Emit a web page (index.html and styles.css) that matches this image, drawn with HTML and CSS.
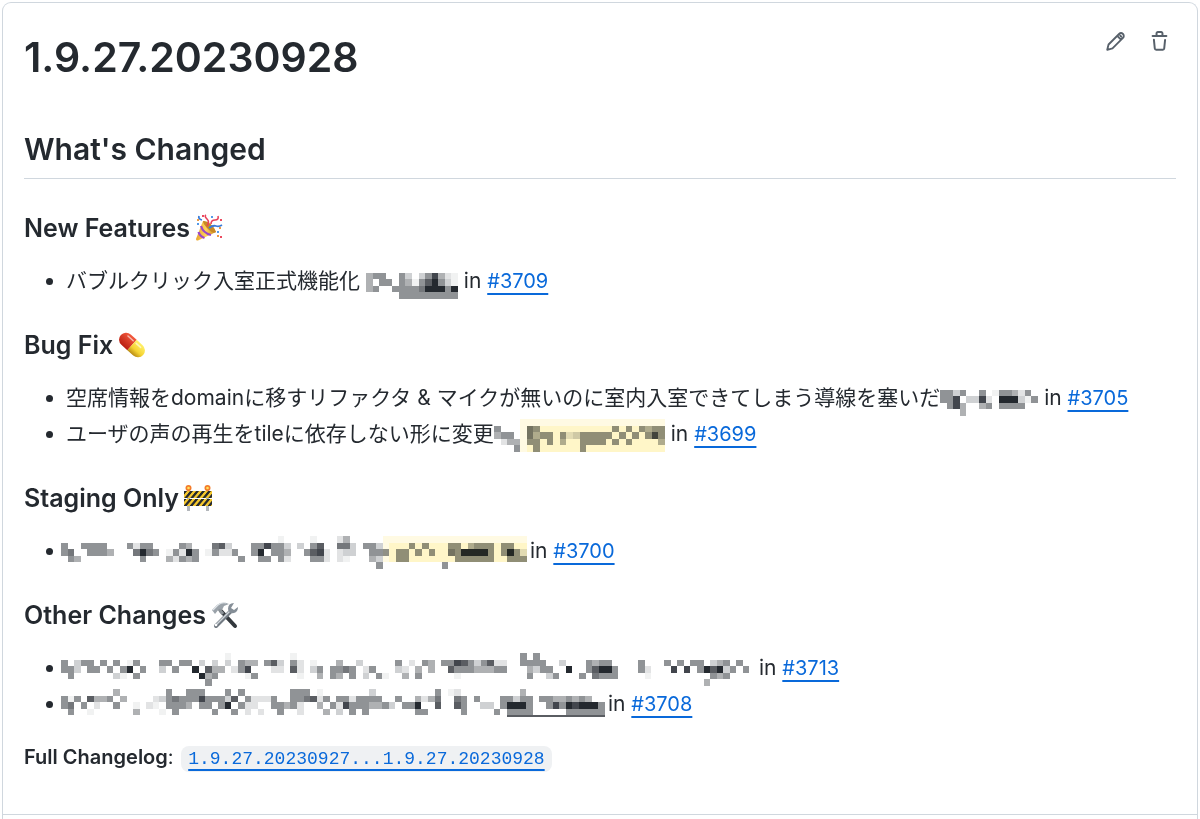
FILE: index.html
```html
<!DOCTYPE html>
<html lang="ja">
  <head>
    <meta charset="utf-8">
    <title>1.9.27.20230928</title>
    <link rel="stylesheet" href="styles.css">
  </head>
<body>

  <main class="release">
    <header class="release-header">
      <h1>1.9.27.20230928</h1>
      <div class="actions">
        <button type="button" aria-label="Edit">
          <svg viewBox="0 0 16 16"><path class="line" d="m1.700 14.300 1-4 8-8a2 2 0 0 1 3 3l-8 8ZM9.300 3.700l3 3M11.600 2.900a1.400 1.400 0 0 0 1.500 1.500"/></svg>
        </button>
        <button type="button" aria-label="Delete">
          <svg viewBox="0 0 16 16"><path d="M11 1.75V3h2.25a.75.75 0 0 1 0 1.5H2.75a.75.75 0 0 1 0-1.5H5V1.75C5 .784 5.784 0 6.75 0h2.5C10.216 0 11 .784 11 1.75ZM4.496 6.675l.66 6.6a.25.25 0 0 0 .249.225h5.19a.25.25 0 0 0 .249-.225l.66-6.6a.75.75 0 0 1 1.492.149l-.66 6.6A1.748 1.748 0 0 1 10.595 15h-5.19a1.75 1.75 0 0 1-1.741-1.575l-.66-6.6a.75.75 0 1 1 1.492-.15ZM6.5 1.75V3h3V1.75a.25.25 0 0 0-.25-.25h-2.5a.25.25 0 0 0-.25.25Z"/></svg>
        </button>
      </div>
    </header>

    <section class="notes">
      <h2>What's Changed</h2>

      <h3>New Features
        <svg class="emoji" viewBox="0 0 28 28" aria-hidden="true">
          <defs>
            <linearGradient id="cone"><stop offset="0" stop-color="#e9a52c"/><stop offset=".5" stop-color="#ffd45a"/><stop offset="1" stop-color="#c98218"/></linearGradient>
          </defs>
          <path d="M8 7 1 25q0 2 2 1.500L21 18Q19 10 8 7Z" fill="url(#cone)"/>
          <path d="M8 7q7-1 13 11-3 2-8-3T8 7Z" fill="#c98a24"/>
          <path d="M6 12q2 7 10 9M3.500 18q1 4 6 6" fill="none" stroke="#9b48c8" stroke-width="2.200"/>
          <path d="M12 12q3-4 0-7t-1-4M16 10q0-4 4-4t3-4" fill="none" stroke="#e8425a" stroke-width="1.600"/>
          <path d="M14 14q4-3 7-2t6-1M7 6Q3 5 4 2" fill="none" stroke="#397bd8" stroke-width="1.800"/>
          <path d="M7 1h2v2H7zM25 5h2v2h-2zM25 22h2v2h-2z" fill="#eb4b61"/>
          <path d="M2 9h2v2H2zM16 2h2v2h-2zM22 17h2v2h-2z" fill="#5499e8"/>
          <path d="M24 13h2v2h-2zM2 5h2v2H2zM22 21h2v2h-2z" fill="#ef9b43"/>
        </svg>
      </h3>
      <ul>
        <li>バブルクリック入室正式機能化 <svg class="mosaic" data-cols="14" data-cells="/0:455 5:53 8:358421/0:4 2:55 5:541579531/0:45 4:55556999 12:59/5:555555555"></svg> in <a href="#3709">#3709</a></li>
      </ul>

      <h3>Bug Fix
        <svg class="emoji" viewBox="0 0 28 28" aria-hidden="true">
          <defs>
            <linearGradient id="pill-red" x2="0" y2="1"><stop offset="0" stop-color="#f45a3e"/><stop offset="1" stop-color="#b91f12"/></linearGradient>
            <linearGradient id="pill-yellow" x2="0" y2="1"><stop offset="0" stop-color="#fff16a"/><stop offset=".6" stop-color="#f5d332"/><stop offset="1" stop-color="#b98c14"/></linearGradient>
          </defs>
          <g transform="rotate(42 14 14)">
            <path d="M14 7H6a7 7 0 0 0 0 14h8Z" fill="url(#pill-red)"/>
            <path d="M14 7h8a7 7 0 0 1 0 14h-8Z" fill="url(#pill-yellow)"/>
            <path d="M5 10h7M16 10h6" stroke="#fff" stroke-width="1.500" stroke-linecap="round" opacity=".6"/>
          </g>
        </svg>
      </h3>
      <ul>
        <li>空席情報をdomainに移すリファクタ &amp; マイクが無いのに室内入室できてしまう導線を塞いだ<svg class="mosaic" data-cols="15" data-cells="/0:5535 6:5 8:155425/0:558 4:3382 9:999315/1:584 6:45 9:5555/3:4"></svg> in <a href="#3705">#3705</a></li>
        <li>ユーザの声の再生をtileに依存しない形に変更<svg class="mosaic" data-cols="26" data-mark="4 0 22 5" data-cells="/0:5 5:65 18:5 20:5 22:5455/0:455 5:6455 10:5235555 17:5 19:5 21:5 23:585/1:244 5:55 8:5 10:4 13:555 16:5 18:5 20:5 25:4/3:5 6:5 13:5"></svg> in <a href="#3699">#3699</a></li>
      </ul>

      <h3>Staging Only
        <svg class="emoji" viewBox="0 0 28 28" aria-hidden="true">
          <defs>
            <pattern id="stripes" width="6" height="8" patternUnits="userSpaceOnUse" patternTransform="skewX(-40)"><path d="M0 0h6v8H0z" fill="#f5c72c"/><path d="M0 0h3v8H0z" fill="#282b2e"/></pattern>
          </defs>
          <path d="M3 5h3v22H3zM22 5h3v22h-3z" fill="#b3b7bb"/>
          <path d="M0 7h28v7H0zM0 15h28v7H0z" fill="url(#stripes)"/>
          <circle cx="4.500" cy="4" r="3" fill="#f47b2a"/><circle cx="23.500" cy="4" r="3" fill="#f47b2a"/>
          <circle cx="4.500" cy="4" r="1.300" fill="#ffe45b"/><circle cx="23.500" cy="4" r="1.300" fill="#ffe45b"/>
        </svg>
      </h3>
      <ul>
        <li><svg class="mosaic lead" data-cols="71" data-mark="49 0 22 4" data-cells="33:1 38:1 42:24/0:5 3:5555 10:5255 18:54 23:673 29:558553 36:3 38:57 42:663 46:553 53:5 55:5 59:55 62:4555 67:55/0:56 4:5554 11:6965 16:15295 22:15225 29:59 32:554 37:5782 42:233 47:555 51:55 54:5 56:5 59:6599995 67:5952/1:54 12:5 16:42545 27:5 30:55 33:52 38:552 42:21 47:43 51:55 60:555555 68:555/48:5 58:5"></svg> in <a href="#3700">#3700</a></li>
      </ul>

      <h3>Other Changes
        <svg class="emoji" viewBox="0 0 28 28" aria-hidden="true">
          <path d="m10 10 14 15" stroke="#33383d" stroke-width="4" stroke-linecap="round"/>
          <path d="m7 7 5 6" stroke="#8b9298" stroke-width="3"/>
          <path d="M1 9 6 4q5-4 12-1l-5 2-2 4-3-1-4 5Z" fill="#9aa2a9"/>
          <path d="m2 9 5-5q4-3 8-2" fill="none" stroke="#dfe4e8" stroke-width="1.200"/>
          <path d="M5 25 20 10" stroke="#737b83" stroke-width="4" stroke-linecap="round"/>
          <path d="M5 24 20 9" stroke="#d0d6db" stroke-width="1.500"/>
          <path d="M23 2q-6 0-6 6 1 5 6 4 4-1 4-6l-4 3-3-2Z" fill="#858e97"/>
          <circle cx="5" cy="24" r="1.300" fill="#fff"/>
        </svg>
      </h3>
      <ul>
        <li><svg class="mosaic lead" data-cols="106" data-cells="25:1 35:1 70:5 72:5/0:5 2:355 6:5 8:5 10:15 15:55 18:55 21:3 23:3 25:3 27:544 31:573 35:52 38:1 42:4 45:3 51:5 53:2 55:54 58:5587535722 70:5555 76:3 80:5455 88:5 92:5 94:5 96:55 99:345 103:5/0:553 4:55 7:5 9:59 12:5 15:3 17:5 20:9 22:744 26:258 32:22 35:72 38:35 41:5565 46:25 51:32 54:4 56:4 59:75554 64:4455 71:4355 77:9 80:57995 88:52 93:8 95:8 97:597935 104:5/1:5 8:31 11:5 21:945 28:15 36:1 39:4 41:54 44:5 46:3 48:51 52:4 54:5 60:1 71:5 74:35 79:5 81:6555 89:1 99:545/22:5 98:4"></svg> in <a href="#3713">#3713</a></li>
        <li><svg class="mosaic lead" data-cols="83" data-rule="68" data-cells="8:4 16:5 19:555 25:5 27:5 35:555 39:1 47:3 57:5 59:12 70:4/0:515 4:7445 9:4 14:2356555855537 28:52225 35:556725 42:5525555 51:5 54:4246 60:65 63:5 67:55355 73:554 76:45454/0:56 3:5 5:2 8:5 11:1 13:21 16:5554 21:55 24:59 27:522 32:55452 39:4 41:5285554453 52:559 57:7 60:75 64:33 67:59995 74:5859899 81:95/1:5 4:1 11:4 15:1 17:5 23:5 26:5 28:2 30:2 33:5 36:2 40:4 42:3 44:5 46:5 54:55 61:5 66:5 68:5555 77:555555"></svg> in <a href="#3708">#3708</a></li>
      </ul>

      <p class="changelog"><strong>Full Changelog</strong>: <a href="#compare"><code>1.9.27.20230927...1.9.27.20230928</code></a></p>
    </section>

    <footer class="release-footer"></footer>
  </main>

  <script src="mosaic.js"></script>
</body>
</html>
```

FILE: styles.css
```css
* { box-sizing: border-box; }

body {
  margin: 0;
  color: #24292f;
  background: #fff;
  font: 20px/32px Inter, "Noto Sans CJK JP", sans-serif;
}

.release {
  margin: 2px 2px 0;
  border: 1px solid #d0d7de;
  border-bottom: none;
  border-radius: 9px 9px 0 0;
}

.release-header {
  display: flex;
  justify-content: space-between;
  align-items: flex-start;
  padding: 26px 27px 0 21px;
}

h1 { margin: 0; font-size: 41px; line-height: 56px; font-weight: 600; }

.actions { display: flex; gap: 23px; padding-top: 2px; }
.actions button {
  display: block;
  padding: 0;
  border: none;
  background: none;
}
.actions svg { display: block; width: 21px; height: 21px; fill: #57606a; }
.actions .line {
  fill: none;
  stroke: #57606a;
  stroke-width: 1.4;
  stroke-linejoin: round;
}

.notes { padding: 43px 21px 41px; }

h2 {
  margin: 0 0 33px;
  padding-bottom: 8px;
  border-bottom: 1px solid #d0d7de;
  font-size: 30px;
  line-height: 42px;
  font-weight: 600;
}

h3 {
  display: flex;
  align-items: center;
  gap: 5px;
  margin: 32px 0 21px;
  font-size: 25px;
  line-height: 32px;
  font-weight: 600;
}

.emoji { width: 28px; height: 28px; }

ul { margin: 0; padding-left: 42px; }
li { height: 32px; font-size: 21px; white-space: nowrap; }
li + li { margin-top: 4px; }

a {
  color: #0969da;
  font-size: 20px;
  text-decoration: underline;
  text-decoration-thickness: 2px;
  text-underline-offset: 5px;
}

/* pixelated names, drawn by mosaic.js */
.mosaic { height: 33px; vertical-align: middle; }
.mosaic.lead { margin-left: -5px; margin-right: -3px; }
.mosaic .cell { mix-blend-mode: multiply; }
.mosaic .mark { fill: #fff6c8; }
.mosaic .mark-edge { fill: #fffae3; }

.changelog { margin: 21px 0 0; }
.changelog strong { font-weight: 600; }
.changelog a { text-decoration: none; }
.changelog code {
  margin-left: 2px;
  padding: 3px 7px;
  border-radius: 8px;
  background: #eff1f3;
  font: 18px "Liberation Mono", monospace;
  text-decoration: underline;
  text-decoration-thickness: 2px;
  text-underline-offset: 5px;
}

.release-footer { height: 5px; border-top: 1px solid #d0d7de; }
```

FILE: mosaic.js
```js
// data-cells: rows split by "/", each row is a list of column:shades
var shades = ['', '#f1f2f2', '#e2e3e4', '#cfd1d3', '#afb1b3', '#909396', '#74777b', '#5a5d62', '#42464d', '#24292f'];

function rect(svg, cls, x, y, w, h, fill) {
  var r = document.createElementNS('http://www.w3.org/2000/svg', 'rect');
  r.setAttribute('class', cls);
  r.setAttribute('x', x);
  r.setAttribute('y', y);
  r.setAttribute('width', w);
  r.setAttribute('height', h);
  if (fill) r.setAttribute('fill', fill);
  svg.appendChild(r);
}

document.querySelectorAll('.mosaic').forEach(function (svg) {
  var cols = Number(svg.dataset.cols);
  svg.setAttribute('viewBox', '0 0 ' + cols + ' 5');
  svg.setAttribute('preserveAspectRatio', 'none');
  svg.setAttribute('shape-rendering', 'crispEdges');
  svg.setAttribute('width', Math.round(cols * 6.56));

  if (svg.dataset.mark) {
    var m = svg.dataset.mark.split(' ');
    rect(svg, 'mark', m[0], m[1], m[2], m[3]);
    rect(svg, 'mark-edge', m[0], m[1], m[2], 1);
    rect(svg, 'mark-edge', m[0], m[1], 1, m[3]);
  }

  svg.dataset.cells.split('/').forEach(function (row, y) {
    row.split(' ').forEach(function (run) {
      if (!run) return;
      var part = run.split(':');
      part[1].split('').forEach(function (s, i) {
        rect(svg, 'cell', Number(part[0]) + i, y, 1, 1, shades[s]);
      });
    });
  });

  if (svg.dataset.rule) {
    rect(svg, 'cell', svg.dataset.rule, 4, cols - svg.dataset.rule, 0.2, '#5a5d62');
  }
});
```
